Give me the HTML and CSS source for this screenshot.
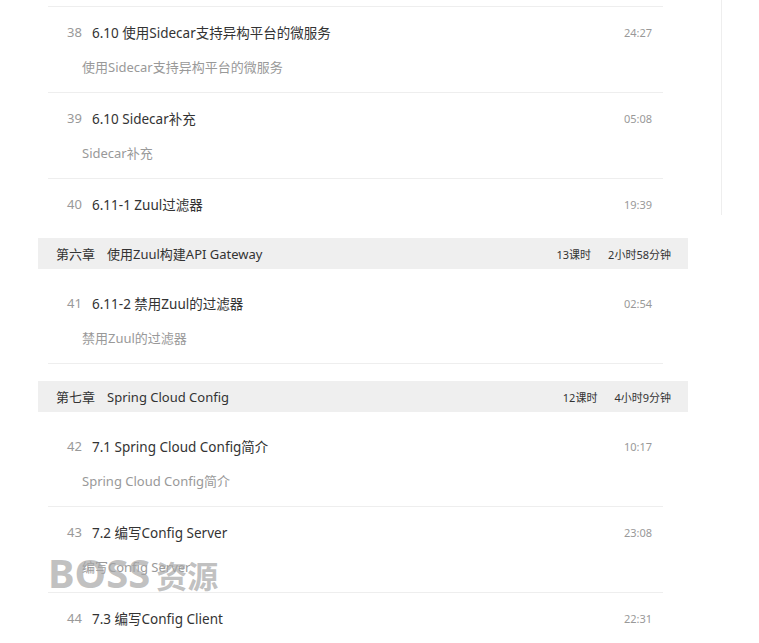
FILE: index.html
```html
<!DOCTYPE html>
<html lang="zh-CN">
<head>
    <meta charset="UTF-8">
    <meta name="viewport" content="width=device-width, initial-scale=1.0">
    <title>课程章节</title>
    <link rel="stylesheet" href="styles.css">
</head>
<body>
    <div class="page">
        <div class="main">
            <div class="top-line"></div>

            <div class="lesson">
                <div class="lesson-head">
                    <span class="num">38</span>
                    <span class="title">6.10 使用Sidecar支持异构平台的微服务</span>
                    <span class="time">24:27</span>
                </div>
                <p class="desc">使用Sidecar支持异构平台的微服务</p>
            </div>

            <div class="lesson">
                <div class="lesson-head">
                    <span class="num">39</span>
                    <span class="title">6.10 Sidecar补充</span>
                    <span class="time">05:08</span>
                </div>
                <p class="desc">Sidecar补充</p>
            </div>

            <div class="lesson last">
                <div class="lesson-head">
                    <span class="num">40</span>
                    <span class="title">6.11-1 Zuul过滤器</span>
                    <span class="time">19:39</span>
                </div>
            </div>

            <div class="chapter">
                <div class="chapter-name"><span class="chapter-no">第六章</span>使用Zuul构建API Gateway</div>
                <div class="chapter-info"><span>13课时</span><span>2小时58分钟</span></div>
            </div>
            <div class="lessons">
                <div class="lesson">
                    <div class="lesson-head">
                        <span class="num">41</span>
                        <span class="title">6.11-2 禁用Zuul的过滤器</span>
                        <span class="time">02:54</span>
                    </div>
                    <p class="desc">禁用Zuul的过滤器</p>
                </div>
            </div>

            <div class="chapter">
                <div class="chapter-name"><span class="chapter-no">第七章</span>Spring Cloud Config</div>
                <div class="chapter-info"><span>12课时</span><span>4小时9分钟</span></div>
            </div>
            <div class="lessons">
                <div class="lesson">
                    <div class="lesson-head">
                        <span class="num">42</span>
                        <span class="title">7.1 Spring Cloud Config简介</span>
                        <span class="time">10:17</span>
                    </div>
                    <p class="desc">Spring Cloud Config简介</p>
                </div>
                <div class="lesson">
                    <div class="lesson-head">
                        <span class="num">43</span>
                        <span class="title">7.2 编写Config Server</span>
                        <span class="time">23:08</span>
                    </div>
                    <p class="desc">编写Config Server</p>
                </div>
                <div class="lesson">
                    <div class="lesson-head">
                        <span class="num">44</span>
                        <span class="title">7.3 编写Config Client</span>
                        <span class="time">22:31</span>
                    </div>
                    <p class="desc">编写Config Client</p>
                </div>
            </div>

            <!-- 水印 -->
            <div class="watermark"><span class="wm-en">BOSS</span><span class="wm-cn">资源</span></div>
        </div>
        <div class="side"></div>
    </div>
</body>
</html>
```

FILE: styles.css
```css
body {
    margin: 0;
    font-family: "Noto Sans", "Noto Sans CJK SC", sans-serif;
    color: #333;
    background: #fff;
    overflow: hidden;
}
.page {
    display: flex;
    align-items: flex-start;
}
.main {
    position: relative;
    width: 650px;
    margin-left: 38px;
}
.side {
    margin-left: 33px;
    height: 215px;
    border-left: 1px solid #eee;
}
.top-line {
    height: 6px;
    margin: 0 25px 0 10px;
    border-bottom: 1px solid #eee;
}
.lessons {
    padding-top: 9px;
}
.lesson {
    margin: 0 25px 0 10px;
    padding: 15px 11px 15px 19px;
    border-bottom: 1px solid #eee;
}
.lesson.last {
    padding-bottom: 7px;
    border-bottom: none;
}
.lesson-head {
    display: flex;
    align-items: center;
    height: 20px;
}
.num {
    width: 25px;
    font-size: 13px;
    color: #999;
}
.title {
    flex: 1;
    font-size: 13.5px;
    color: #333;
}
.time {
    font-size: 11px;
    color: #999;
}
.desc {
    margin: 15px 0 0 15px;
    height: 20px;
    line-height: 20px;
    font-size: 13px;
    color: #999;
}
.chapter {
    display: flex;
    justify-content: space-between;
    align-items: center;
    height: 31px;
    margin-top: 17px;
    padding: 0 17px 0 18px;
    background: #efefef;
    font-size: 13px;
}
.chapter-no {
    margin-right: 12px;
}
.chapter-info {
    display: flex;
    gap: 17px;
    font-size: 11px;
}
.watermark {
    position: absolute;
    left: 10px;
    top: 553px;
    display: flex;
    align-items: baseline;
    gap: 6px;
    font-weight: bold;
    line-height: 1;
    color: rgba(165, 165, 165, 0.7);
}
.wm-en {
    font-size: 40px;
}
.wm-cn {
    font-size: 31px;
}
```
